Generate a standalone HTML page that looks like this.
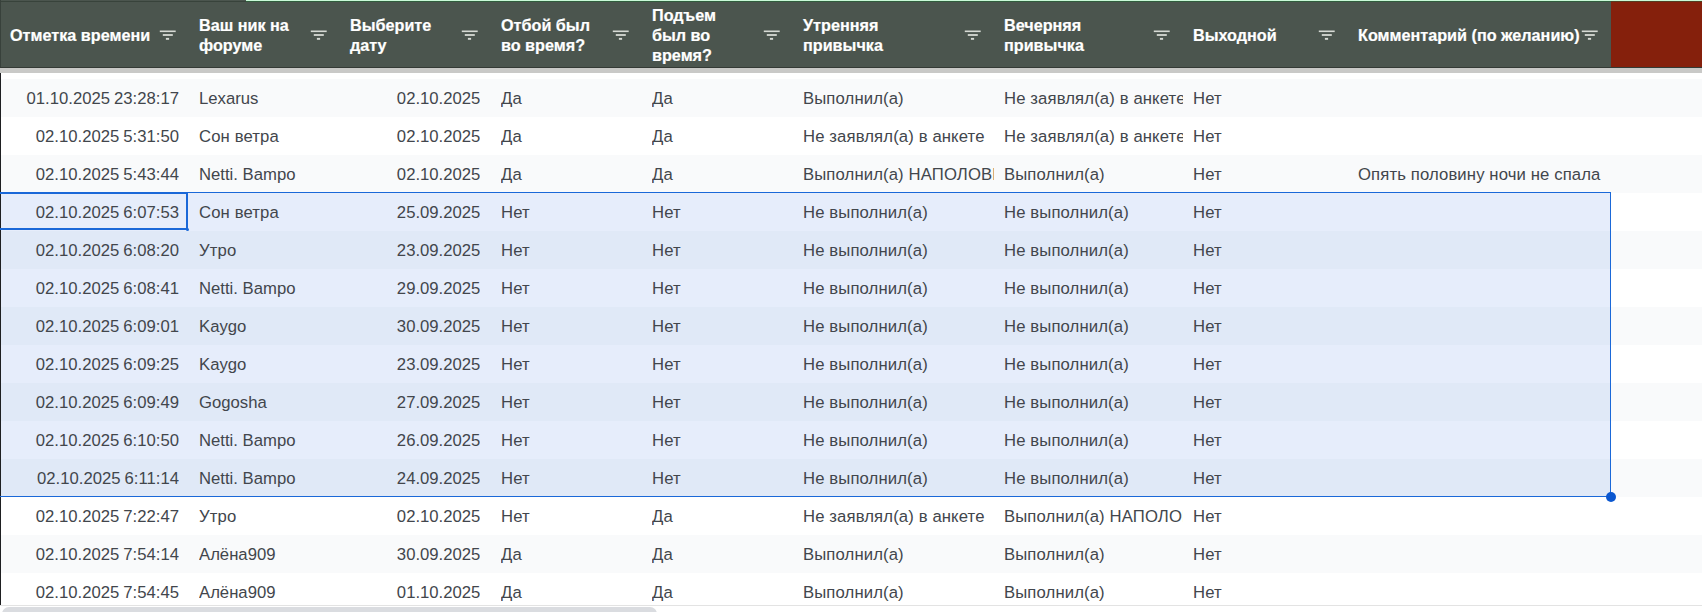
<!DOCTYPE html>
<html><head><meta charset="utf-8">
<style>
*{margin:0;padding:0;box-sizing:border-box}
html,body{width:1702px;height:612px;overflow:hidden;background:#fff}
body{position:relative;font-family:"Liberation Sans",sans-serif}
.a{position:absolute}
.h{position:absolute;color:#fff;font-weight:bold;-webkit-text-stroke:0.2px #fff;font-size:16.2px;line-height:20px;white-space:nowrap}
.d{position:absolute;color:#42464c;font-size:16.7px;line-height:20px;white-space:nowrap;overflow:hidden}
</style></head><body>

<div class="a" style="left:0;top:0;width:1702px;height:67px;background:#4b554e"></div>
<div class="a" style="left:0;top:1px;width:246px;height:1px;background:#38433b"></div>
<div class="a" style="left:246px;top:0;width:1456px;height:1px;background:#c9fad8"></div>
<div class="a" style="left:246px;top:1px;width:1456px;height:1px;background:#305d3d"></div>
<div class="a" style="left:1611px;top:2px;width:91px;height:65px;background:#85200c"></div>
<div class="a" style="left:1611px;top:1px;width:91px;height:1px;background:#553d22"></div>
<div class="a" style="left:0;top:0;width:1px;height:67px;background:#38413b"></div>
<div class="a" style="left:0;top:67px;width:1702px;height:1px;background:#343a35"></div>
<div class="a" style="left:0;top:68px;width:1702px;height:5px;background:#c9c9c7"></div>
<div class="a" style="left:0;top:79px;width:1702px;height:38px;background:#f9fafb"></div>
<div class="a" style="left:0;top:155px;width:1702px;height:38px;background:#f9fafb"></div>
<div class="a" style="left:0;top:231px;width:1702px;height:38px;background:#f9fafb"></div>
<div class="a" style="left:0;top:307px;width:1702px;height:38px;background:#f9fafb"></div>
<div class="a" style="left:0;top:383px;width:1702px;height:38px;background:#f9fafb"></div>
<div class="a" style="left:0;top:459px;width:1702px;height:38px;background:#f9fafb"></div>
<div class="a" style="left:0;top:535px;width:1702px;height:38px;background:#f9fafb"></div>
<div class="a" style="left:0;top:193px;width:1611px;height:38px;background:#e6edfb"></div>
<div class="a" style="left:0;top:231px;width:1611px;height:38px;background:#e0e9f7"></div>
<div class="a" style="left:0;top:269px;width:1611px;height:38px;background:#e6edfb"></div>
<div class="a" style="left:0;top:307px;width:1611px;height:38px;background:#e0e9f7"></div>
<div class="a" style="left:0;top:345px;width:1611px;height:38px;background:#e6edfb"></div>
<div class="a" style="left:0;top:383px;width:1611px;height:38px;background:#e0e9f7"></div>
<div class="a" style="left:0;top:421px;width:1611px;height:38px;background:#e6edfb"></div>
<div class="a" style="left:0;top:459px;width:1611px;height:38px;background:#e0e9f7"></div>
<div class="h" style="left:10px;top:25.0px">Отметка времени</div>
<svg class="a" style="left:159px;top:28px" width="18" height="14" viewBox="0 0 18 14"><rect x="0.8" y="2.5" width="15.9" height="1.6" fill="#d6dad4"/><rect x="3.8" y="6.1" width="10" height="1.8" fill="#d6dad4"/><rect x="6.9" y="9.9" width="3.2" height="1.9" fill="#d6dad4"/></svg>
<div class="h" style="left:199px;top:15.0px">Ваш ник на</div>
<div class="h" style="left:199px;top:35.0px">форуме</div>
<svg class="a" style="left:310px;top:28px" width="18" height="14" viewBox="0 0 18 14"><rect x="0.8" y="2.5" width="15.9" height="1.6" fill="#d6dad4"/><rect x="3.8" y="6.1" width="10" height="1.8" fill="#d6dad4"/><rect x="6.9" y="9.9" width="3.2" height="1.9" fill="#d6dad4"/></svg>
<div class="h" style="left:350px;top:15.0px">Выберите</div>
<div class="h" style="left:350px;top:35.0px">дату</div>
<svg class="a" style="left:461px;top:28px" width="18" height="14" viewBox="0 0 18 14"><rect x="0.8" y="2.5" width="15.9" height="1.6" fill="#d6dad4"/><rect x="3.8" y="6.1" width="10" height="1.8" fill="#d6dad4"/><rect x="6.9" y="9.9" width="3.2" height="1.9" fill="#d6dad4"/></svg>
<div class="h" style="left:501px;top:15.0px">Отбой был</div>
<div class="h" style="left:501px;top:35.0px">во время?</div>
<svg class="a" style="left:612px;top:28px" width="18" height="14" viewBox="0 0 18 14"><rect x="0.8" y="2.5" width="15.9" height="1.6" fill="#d6dad4"/><rect x="3.8" y="6.1" width="10" height="1.8" fill="#d6dad4"/><rect x="6.9" y="9.9" width="3.2" height="1.9" fill="#d6dad4"/></svg>
<div class="h" style="left:652px;top:5.0px">Подъем</div>
<div class="h" style="left:652px;top:25.0px">был во</div>
<div class="h" style="left:652px;top:45.0px">время?</div>
<svg class="a" style="left:763px;top:28px" width="18" height="14" viewBox="0 0 18 14"><rect x="0.8" y="2.5" width="15.9" height="1.6" fill="#d6dad4"/><rect x="3.8" y="6.1" width="10" height="1.8" fill="#d6dad4"/><rect x="6.9" y="9.9" width="3.2" height="1.9" fill="#d6dad4"/></svg>
<div class="h" style="left:803px;top:15.0px">Утренняя</div>
<div class="h" style="left:803px;top:35.0px">привычка</div>
<svg class="a" style="left:964px;top:28px" width="18" height="14" viewBox="0 0 18 14"><rect x="0.8" y="2.5" width="15.9" height="1.6" fill="#d6dad4"/><rect x="3.8" y="6.1" width="10" height="1.8" fill="#d6dad4"/><rect x="6.9" y="9.9" width="3.2" height="1.9" fill="#d6dad4"/></svg>
<div class="h" style="left:1004px;top:15.0px">Вечерняя</div>
<div class="h" style="left:1004px;top:35.0px">привычка</div>
<svg class="a" style="left:1153px;top:28px" width="18" height="14" viewBox="0 0 18 14"><rect x="0.8" y="2.5" width="15.9" height="1.6" fill="#d6dad4"/><rect x="3.8" y="6.1" width="10" height="1.8" fill="#d6dad4"/><rect x="6.9" y="9.9" width="3.2" height="1.9" fill="#d6dad4"/></svg>
<div class="h" style="left:1193px;top:25.0px">Выходной</div>
<svg class="a" style="left:1318px;top:28px" width="18" height="14" viewBox="0 0 18 14"><rect x="0.8" y="2.5" width="15.9" height="1.6" fill="#d6dad4"/><rect x="3.8" y="6.1" width="10" height="1.8" fill="#d6dad4"/><rect x="6.9" y="9.9" width="3.2" height="1.9" fill="#d6dad4"/></svg>
<div class="h" style="left:1358px;top:25.0px">Комментарий (по желанию)</div>
<svg class="a" style="left:1581px;top:28px" width="18" height="14" viewBox="0 0 18 14"><rect x="0.8" y="2.5" width="15.9" height="1.6" fill="#d6dad4"/><rect x="3.8" y="6.1" width="10" height="1.8" fill="#d6dad4"/><rect x="6.9" y="9.9" width="3.2" height="1.9" fill="#d6dad4"/></svg>
<div class="d" style="left:0px;top:89px;width:179px;text-align:right;word-spacing:-0.6px">01.10.2025 23:28:17</div>
<div class="d" style="left:199px;top:89px;width:141px">Lexarus</div>
<div class="d" style="left:340px;top:89px;width:140.4px;text-align:right">02.10.2025</div>
<div class="d" style="left:501px;top:89px;width:141px;letter-spacing:0.12px">Да</div>
<div class="d" style="left:652px;top:89px;width:141px;letter-spacing:0.12px">Да</div>
<div class="d" style="left:803px;top:89px;width:191px;letter-spacing:0.12px">Выполнил(а)</div>
<div class="d" style="left:1004px;top:89px;width:179px;letter-spacing:0.12px">Не заявлял(а) в анкете</div>
<div class="d" style="left:1193px;top:89px;width:155px;letter-spacing:0.12px">Нет</div>
<div class="d" style="left:0px;top:127px;width:179px;text-align:right;word-spacing:-0.6px">02.10.2025 5:31:50</div>
<div class="d" style="left:199px;top:127px;width:141px;letter-spacing:0.12px">Сон ветра</div>
<div class="d" style="left:340px;top:127px;width:140.4px;text-align:right">02.10.2025</div>
<div class="d" style="left:501px;top:127px;width:141px;letter-spacing:0.12px">Да</div>
<div class="d" style="left:652px;top:127px;width:141px;letter-spacing:0.12px">Да</div>
<div class="d" style="left:803px;top:127px;width:191px;letter-spacing:0.12px">Не заявлял(а) в анкете</div>
<div class="d" style="left:1004px;top:127px;width:179px;letter-spacing:0.12px">Не заявлял(а) в анкете</div>
<div class="d" style="left:1193px;top:127px;width:155px;letter-spacing:0.12px">Нет</div>
<div class="d" style="left:0px;top:165px;width:179px;text-align:right;word-spacing:-0.6px">02.10.2025 5:43:44</div>
<div class="d" style="left:199px;top:165px;width:141px">Netti. Bampo</div>
<div class="d" style="left:340px;top:165px;width:140.4px;text-align:right">02.10.2025</div>
<div class="d" style="left:501px;top:165px;width:141px;letter-spacing:0.12px">Да</div>
<div class="d" style="left:652px;top:165px;width:141px;letter-spacing:0.12px">Да</div>
<div class="d" style="left:803px;top:165px;width:191px;letter-spacing:0.12px">Выполнил(а) НАПОЛОВИНУ</div>
<div class="d" style="left:1004px;top:165px;width:179px;letter-spacing:0.12px">Выполнил(а)</div>
<div class="d" style="left:1193px;top:165px;width:155px;letter-spacing:0.12px">Нет</div>
<div class="d" style="left:1358px;top:165px;width:253px;letter-spacing:0.12px">Опять половину ночи не спала</div>
<div class="d" style="left:0px;top:203px;width:179px;text-align:right;word-spacing:-0.6px">02.10.2025 6:07:53</div>
<div class="d" style="left:199px;top:203px;width:141px;letter-spacing:0.12px">Сон ветра</div>
<div class="d" style="left:340px;top:203px;width:140.4px;text-align:right">25.09.2025</div>
<div class="d" style="left:501px;top:203px;width:141px;letter-spacing:0.12px">Нет</div>
<div class="d" style="left:652px;top:203px;width:141px;letter-spacing:0.12px">Нет</div>
<div class="d" style="left:803px;top:203px;width:191px;letter-spacing:0.12px">Не выполнил(а)</div>
<div class="d" style="left:1004px;top:203px;width:179px;letter-spacing:0.12px">Не выполнил(а)</div>
<div class="d" style="left:1193px;top:203px;width:155px;letter-spacing:0.12px">Нет</div>
<div class="d" style="left:0px;top:241px;width:179px;text-align:right;word-spacing:-0.6px">02.10.2025 6:08:20</div>
<div class="d" style="left:199px;top:241px;width:141px;letter-spacing:0.12px">Утро</div>
<div class="d" style="left:340px;top:241px;width:140.4px;text-align:right">23.09.2025</div>
<div class="d" style="left:501px;top:241px;width:141px;letter-spacing:0.12px">Нет</div>
<div class="d" style="left:652px;top:241px;width:141px;letter-spacing:0.12px">Нет</div>
<div class="d" style="left:803px;top:241px;width:191px;letter-spacing:0.12px">Не выполнил(а)</div>
<div class="d" style="left:1004px;top:241px;width:179px;letter-spacing:0.12px">Не выполнил(а)</div>
<div class="d" style="left:1193px;top:241px;width:155px;letter-spacing:0.12px">Нет</div>
<div class="d" style="left:0px;top:279px;width:179px;text-align:right;word-spacing:-0.6px">02.10.2025 6:08:41</div>
<div class="d" style="left:199px;top:279px;width:141px">Netti. Bampo</div>
<div class="d" style="left:340px;top:279px;width:140.4px;text-align:right">29.09.2025</div>
<div class="d" style="left:501px;top:279px;width:141px;letter-spacing:0.12px">Нет</div>
<div class="d" style="left:652px;top:279px;width:141px;letter-spacing:0.12px">Нет</div>
<div class="d" style="left:803px;top:279px;width:191px;letter-spacing:0.12px">Не выполнил(а)</div>
<div class="d" style="left:1004px;top:279px;width:179px;letter-spacing:0.12px">Не выполнил(а)</div>
<div class="d" style="left:1193px;top:279px;width:155px;letter-spacing:0.12px">Нет</div>
<div class="d" style="left:0px;top:317px;width:179px;text-align:right;word-spacing:-0.6px">02.10.2025 6:09:01</div>
<div class="d" style="left:199px;top:317px;width:141px">Kaygo</div>
<div class="d" style="left:340px;top:317px;width:140.4px;text-align:right">30.09.2025</div>
<div class="d" style="left:501px;top:317px;width:141px;letter-spacing:0.12px">Нет</div>
<div class="d" style="left:652px;top:317px;width:141px;letter-spacing:0.12px">Нет</div>
<div class="d" style="left:803px;top:317px;width:191px;letter-spacing:0.12px">Не выполнил(а)</div>
<div class="d" style="left:1004px;top:317px;width:179px;letter-spacing:0.12px">Не выполнил(а)</div>
<div class="d" style="left:1193px;top:317px;width:155px;letter-spacing:0.12px">Нет</div>
<div class="d" style="left:0px;top:355px;width:179px;text-align:right;word-spacing:-0.6px">02.10.2025 6:09:25</div>
<div class="d" style="left:199px;top:355px;width:141px">Kaygo</div>
<div class="d" style="left:340px;top:355px;width:140.4px;text-align:right">23.09.2025</div>
<div class="d" style="left:501px;top:355px;width:141px;letter-spacing:0.12px">Нет</div>
<div class="d" style="left:652px;top:355px;width:141px;letter-spacing:0.12px">Нет</div>
<div class="d" style="left:803px;top:355px;width:191px;letter-spacing:0.12px">Не выполнил(а)</div>
<div class="d" style="left:1004px;top:355px;width:179px;letter-spacing:0.12px">Не выполнил(а)</div>
<div class="d" style="left:1193px;top:355px;width:155px;letter-spacing:0.12px">Нет</div>
<div class="d" style="left:0px;top:393px;width:179px;text-align:right;word-spacing:-0.6px">02.10.2025 6:09:49</div>
<div class="d" style="left:199px;top:393px;width:141px">Gogosha</div>
<div class="d" style="left:340px;top:393px;width:140.4px;text-align:right">27.09.2025</div>
<div class="d" style="left:501px;top:393px;width:141px;letter-spacing:0.12px">Нет</div>
<div class="d" style="left:652px;top:393px;width:141px;letter-spacing:0.12px">Нет</div>
<div class="d" style="left:803px;top:393px;width:191px;letter-spacing:0.12px">Не выполнил(а)</div>
<div class="d" style="left:1004px;top:393px;width:179px;letter-spacing:0.12px">Не выполнил(а)</div>
<div class="d" style="left:1193px;top:393px;width:155px;letter-spacing:0.12px">Нет</div>
<div class="d" style="left:0px;top:431px;width:179px;text-align:right;word-spacing:-0.6px">02.10.2025 6:10:50</div>
<div class="d" style="left:199px;top:431px;width:141px">Netti. Bampo</div>
<div class="d" style="left:340px;top:431px;width:140.4px;text-align:right">26.09.2025</div>
<div class="d" style="left:501px;top:431px;width:141px;letter-spacing:0.12px">Нет</div>
<div class="d" style="left:652px;top:431px;width:141px;letter-spacing:0.12px">Нет</div>
<div class="d" style="left:803px;top:431px;width:191px;letter-spacing:0.12px">Не выполнил(а)</div>
<div class="d" style="left:1004px;top:431px;width:179px;letter-spacing:0.12px">Не выполнил(а)</div>
<div class="d" style="left:1193px;top:431px;width:155px;letter-spacing:0.12px">Нет</div>
<div class="d" style="left:0px;top:469px;width:179px;text-align:right;word-spacing:-0.6px">02.10.2025 6:11:14</div>
<div class="d" style="left:199px;top:469px;width:141px">Netti. Bampo</div>
<div class="d" style="left:340px;top:469px;width:140.4px;text-align:right">24.09.2025</div>
<div class="d" style="left:501px;top:469px;width:141px;letter-spacing:0.12px">Нет</div>
<div class="d" style="left:652px;top:469px;width:141px;letter-spacing:0.12px">Нет</div>
<div class="d" style="left:803px;top:469px;width:191px;letter-spacing:0.12px">Не выполнил(а)</div>
<div class="d" style="left:1004px;top:469px;width:179px;letter-spacing:0.12px">Не выполнил(а)</div>
<div class="d" style="left:1193px;top:469px;width:155px;letter-spacing:0.12px">Нет</div>
<div class="d" style="left:0px;top:507px;width:179px;text-align:right;word-spacing:-0.6px">02.10.2025 7:22:47</div>
<div class="d" style="left:199px;top:507px;width:141px;letter-spacing:0.12px">Утро</div>
<div class="d" style="left:340px;top:507px;width:140.4px;text-align:right">02.10.2025</div>
<div class="d" style="left:501px;top:507px;width:141px;letter-spacing:0.12px">Нет</div>
<div class="d" style="left:652px;top:507px;width:141px;letter-spacing:0.12px">Да</div>
<div class="d" style="left:803px;top:507px;width:191px;letter-spacing:0.12px">Не заявлял(а) в анкете</div>
<div class="d" style="left:1004px;top:507px;width:179px;letter-spacing:0.12px">Выполнил(а) НАПОЛОВИНУ</div>
<div class="d" style="left:1193px;top:507px;width:155px;letter-spacing:0.12px">Нет</div>
<div class="d" style="left:0px;top:545px;width:179px;text-align:right;word-spacing:-0.6px">02.10.2025 7:54:14</div>
<div class="d" style="left:199px;top:545px;width:141px">Алёна909</div>
<div class="d" style="left:340px;top:545px;width:140.4px;text-align:right">30.09.2025</div>
<div class="d" style="left:501px;top:545px;width:141px;letter-spacing:0.12px">Да</div>
<div class="d" style="left:652px;top:545px;width:141px;letter-spacing:0.12px">Да</div>
<div class="d" style="left:803px;top:545px;width:191px;letter-spacing:0.12px">Выполнил(а)</div>
<div class="d" style="left:1004px;top:545px;width:179px;letter-spacing:0.12px">Выполнил(а)</div>
<div class="d" style="left:1193px;top:545px;width:155px;letter-spacing:0.12px">Нет</div>
<div class="d" style="left:0px;top:583px;width:179px;text-align:right;word-spacing:-0.6px">02.10.2025 7:54:45</div>
<div class="d" style="left:199px;top:583px;width:141px">Алёна909</div>
<div class="d" style="left:340px;top:583px;width:140.4px;text-align:right">01.10.2025</div>
<div class="d" style="left:501px;top:583px;width:141px;letter-spacing:0.12px">Да</div>
<div class="d" style="left:652px;top:583px;width:141px;letter-spacing:0.12px">Да</div>
<div class="d" style="left:803px;top:583px;width:191px;letter-spacing:0.12px">Выполнил(а)</div>
<div class="d" style="left:1004px;top:583px;width:179px;letter-spacing:0.12px">Выполнил(а)</div>
<div class="d" style="left:1193px;top:583px;width:155px;letter-spacing:0.12px">Нет</div>
<div class="a" style="left:0;top:73px;width:1.3px;height:532px;background:#1e1f21"></div>
<div class="a" style="left:0;top:192px;width:1611px;height:1px;background:#1a68d8"></div>
<div class="a" style="left:1610px;top:192px;width:1px;height:305px;background:#1a68d8"></div>
<div class="a" style="left:0;top:496px;width:1611px;height:1px;background:#1a68d8"></div>
<div class="a" style="left:0;top:192px;width:188px;height:2px;background:#1a68d8"></div>
<div class="a" style="left:186px;top:192px;width:2px;height:38px;background:#1a68d8"></div>
<div class="a" style="left:0;top:228px;width:188px;height:2px;background:#1a68d8"></div>
<div class="a" style="left:185.8px;top:227.8px;width:3.4px;height:3.4px;border-radius:50%;background:#1a68d8"></div>
<div class="a" style="left:1605.7px;top:491.6px;width:10px;height:10px;border-radius:50%;background:#0b57d0"></div>
<div class="a" style="left:0;top:605px;width:1702px;height:1px;background:#e3e3e3"></div>
<div class="a" style="left:0;top:606px;width:1702px;height:6px;background:#fff"></div>
<div class="a" style="left:2px;top:607px;width:655px;height:14px;border-radius:7px;background:#dadce0"></div>
</body></html>
